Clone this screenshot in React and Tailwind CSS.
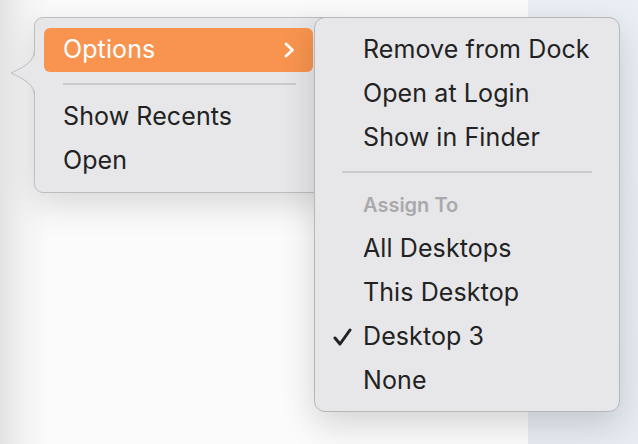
const font = { fontFamily: 'Inter, "Noto Sans", sans-serif' }

function Item({ children, checked }) {
  return (
    <div className="relative flex h-[44px] items-center pl-[48px] text-[25px] tracking-[0.1px] text-[#222]">
      {checked && (
        <svg className="absolute left-[18px] top-[13px]" width="19" height="18" viewBox="0 0 19 18">
          <path d="M2 10 L7 16 L17 2" fill="none" stroke="#222" strokeWidth="3" strokeLinecap="round" strokeLinejoin="round" />
        </svg>
      )}
      {children}
    </div>
  )
}

export default function App() {
  return (
    <div className="relative h-[444px] w-[638px] overflow-hidden bg-[#fbfbfb]" style={font}>
      {/* desktop backdrop */}
      <div className="absolute inset-y-0 left-0 w-[50px] bg-gradient-to-r from-[#e3e3e3] via-[#f3f3f3] to-[#fbfbfb]" />
      <div className="absolute inset-y-0 right-0 w-[110px] bg-gradient-to-b from-[#eaeff6] to-[#e7ecf3]" />

      {/* dock menu */}
      <div className="absolute left-[34px] top-[17px] h-[176px] w-[300px] rounded-[9px] border border-[#bdbdbf] bg-[#e7e7e9] pt-[10px] shadow-[0_12px_34px_rgba(0,0,0,0.14)]">
        <div className="ml-[9px] mr-[20px] flex h-[44px] items-center justify-between rounded-[6px] bg-[#f8944f] pl-[19px] pr-[18px] text-[25px] tracking-[0.1px] text-white">
          <span>Options</span>
          <svg width="12" height="16" viewBox="0 0 12 16">
            <path d="M3 2 L9.5 8 L3 14" fill="none" stroke="#fff" strokeWidth="2.8" strokeLinecap="round" strokeLinejoin="round" />
          </svg>
        </div>
        <div className="flex h-[23px] items-center pl-[28px]">
          <div className="h-[2px] w-[233px] bg-[#cbcbcd]" />
        </div>
        <div className="flex h-[44px] items-center pl-[28px] text-[25px] tracking-[0.1px] text-[#222]">Show Recents</div>
        <div className="flex h-[44px] items-center pl-[28px] text-[25px] tracking-[0.1px] text-[#222]">Open</div>
      </div>
      <svg className="absolute left-[10px] top-[50px]" width="26" height="46" viewBox="0 0 26 46">
        <path d="M25.5 0 C25.5 11 17 16 1 23 C17 30 25.5 35 25.5 46 Z" fill="#e7e7e9" />
        <path d="M24.5 0 C24.5 11 16 16 1 23 C16 30 24.5 35 24.5 46" fill="none" stroke="#bdbdbf" strokeWidth="1" />
      </svg>

      {/* options submenu */}
      <div className="absolute left-[314px] top-[17px] h-[395px] w-[306px] rounded-[11px] border border-[#b7b7b9] bg-[#e7e7e9] pt-[10px] shadow-[0_12px_34px_rgba(0,0,0,0.16)]">
        <Item>Remove from Dock</Item>
        <Item>Open at Login</Item>
        <Item>Show in Finder</Item>
        <div className="flex h-[23px] items-center pl-[27px]">
          <div className="h-[2px] w-[250px] bg-[#cbcbcd]" />
        </div>
        <div className="flex h-[44px] items-center pl-[48px] text-[20px] font-semibold text-[#a9a9ab]">Assign To</div>
        <Item>All Desktops</Item>
        <Item>This Desktop</Item>
        <Item checked>Desktop 3</Item>
        <Item>None</Item>
      </div>
    </div>
  )
}
